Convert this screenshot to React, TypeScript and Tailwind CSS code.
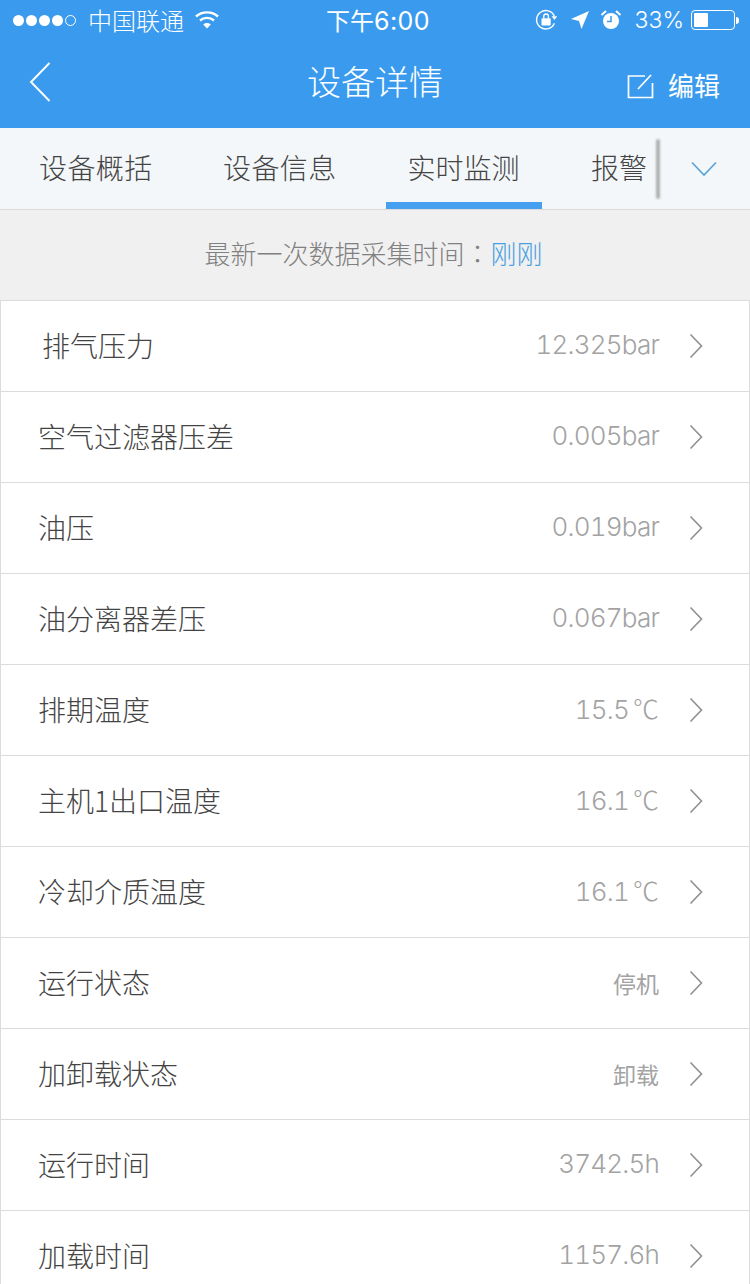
const font = { fontFamily: '"Noto Sans CJK SC", sans-serif' };

const rows: { label: string; value: string; cjk?: boolean; pl?: string }[] = [
  { label: "排气压力", value: "12.325bar", pl: "pl-[41px]" },
  { label: "空气过滤器压差", value: "0.005bar" },
  { label: "油压", value: "0.019bar" },
  { label: "油分离器差压", value: "0.067bar" },
  { label: "排期温度", value: "15.5℃" },
  { label: "主机1出口温度", value: "16.1℃" },
  { label: "冷却介质温度", value: "16.1℃" },
  { label: "运行状态", value: "停机", cjk: true },
  { label: "加卸载状态", value: "卸载", cjk: true },
  { label: "运行时间", value: "3742.5h" },
  { label: "加载时间", value: "1157.6h" },
];

function Chevron() {
  return (
    <svg width="16" height="26" viewBox="0 0 16 26" fill="none" className="shrink-0">
      <path d="M2.5 1.5 L13.5 13 L2.5 24.5" stroke="#8f8f8f" strokeWidth="1.6" />
    </svg>
  );
}

function StatusBar() {
  return (
    <div className="h-10 flex items-center justify-between pl-[13px] pr-[11px] relative text-white">
      <div className="flex items-center">
        <div className="flex items-center gap-[2px]">
          {[0, 1, 2, 3].map((i) => (
            <span key={i} className="w-[11px] h-[11px] rounded-full bg-white" />
          ))}
          <span className="w-[11px] h-[11px] rounded-full border border-white" />
        </div>
        <span className="ml-[12px] text-[24px] leading-none font-light">中国联通</span>
        <svg width="26" height="20" viewBox="0 0 26 20" className="ml-[10px]" fill="none" stroke="#fff" strokeWidth="2.4">
          <path d="M2 6.5 C8 1 18 1 24 6.5" />
          <path d="M6 10.5 C10 7 16 7 20 10.5" />
          <path d="M13 18.5 L9.2 14.4 C11.5 12.6 14.5 12.6 16.8 14.4 Z" fill="#fff" stroke="none" />
        </svg>
      </div>
      <span className="absolute left-[326px] top-[5px] text-[24px] leading-[30px] whitespace-nowrap font-normal">
        下午<span className="text-[25px] tracking-[0.4px]" style={{ fontFamily: '"Inter", sans-serif' }}>6:00</span>
      </span>
      <div className="flex items-center">
        <svg width="24" height="24" viewBox="0 0 26 24" fill="none" stroke="#fff" strokeWidth="1.5">
          <path d="M21 15.5 A10 10 0 1 1 21 8" />
          <path d="M18 8 L24 8 L21 12 Z" fill="#fff" stroke="none" />
          <rect x="7" y="10" width="10" height="8" rx="1" fill="#fff" stroke="none" />
          <path d="M9.5 10 V8 a2.5 2.5 0 0 1 5 0 V10" />
        </svg>
        <svg width="20" height="20" viewBox="0 0 20 20" className="ml-[11px]">
          <path d="M19 1 L11.5 19 L9 11 L1 9 Z" fill="#fff" />
        </svg>
        <svg width="22" height="22" viewBox="0 0 22 22" className="ml-[10px]" fill="none">
          <circle cx="11" cy="12" r="8" fill="#fff" />
          <path d="M11 7 V12.5 H7" stroke="#3a9bee" strokeWidth="1.5" />
          <path d="M1.5 6 L6 2 M20.5 6 L16 2" stroke="#fff" strokeWidth="2" />
        </svg>
        <span className="ml-[13px] text-[23px] leading-none font-light" style={{ fontFamily: '"Inter", sans-serif' }}>33%</span>
        <div className="ml-[7px] flex items-center">
          <div className="w-[44px] h-[20px] rounded-[4px] border border-white p-[2px]">
            <div className="w-[14px] h-full bg-white rounded-[1px]" />
          </div>
          <div className="w-[3px] h-[7px] bg-white rounded-r-full ml-[1px]" />
        </div>
      </div>
    </div>
  );
}

function NavBar() {
  return (
    <div className="h-[88px] flex items-center justify-between relative text-white pb-[2px]">
      <svg width="24" height="42" viewBox="0 0 24 42" fill="none" className="ml-[28px] mb-[2px]">
        <path d="M21.5 2 L3 21 L21.5 40" stroke="#fff" strokeWidth="1.9" />
      </svg>
      <span className="absolute left-0 right-0 top-[17px] text-center text-[34px] leading-[48px] font-light">设备详情</span>
      <div className="flex items-center mr-[30px] mt-[4px]">
        <svg width="27" height="27" viewBox="0 0 27 27" fill="none" stroke="#fff" strokeWidth="1.7">
          <path d="M25.5 11 V25.5 H1.5 V4 H18" />
          <path d="M11 17 L24 3" />
        </svg>
        <span className="ml-[14px] text-[26px] leading-none">编辑</span>
      </div>
    </div>
  );
}

function Tabs() {
  const tabs = ["设备概括", "设备信息"];
  return (
    <div className="h-[82px] bg-[#f3f7fa] border-b border-[#dcdcdc] flex relative overflow-hidden">
      {tabs.map((t) => (
        <div key={t} className="w-[184px] pl-[39px] shrink-0 flex items-center text-[28px] tracking-[0.4px] font-light text-[#444] pb-[4px]">
          {t}
        </div>
      ))}
      <div className="w-[156px] ml-[18px] shrink-0 h-[82px] flex items-center justify-center text-[28px] font-light text-[#444] pb-[4px] border-b-[8px] border-[#479fef]">
        <span className="mt-[8px] -ml-[1px]">实时监测</span>
      </div>
      <div className="ml-[49px] w-[68px] overflow-hidden whitespace-nowrap shrink-0 flex items-center text-[28px] font-light text-[#444] pb-[4px]">
        报警
      </div>
      <div className="absolute right-0 top-0 bottom-0 w-[91px] flex items-center justify-center bg-[#f3f7fa]">
        <div className="absolute left-[-3px] top-[11px] bottom-[10px] w-[4px] bg-[#b0b0b0] blur-[1px] rounded-full" />
        <svg width="26" height="16" viewBox="0 0 26 16" fill="none" className="-ml-[1px]">
          <path d="M1 1.5 L13 14 L25 1.5" stroke="#5aa3d6" strokeWidth="1.7" />
        </svg>
      </div>
    </div>
  );
}

function Value({ value, cjk }: { value: string; cjk?: boolean }) {
  if (cjk) return <span className="mr-[29px] leading-none text-[#a3a3a3] whitespace-nowrap text-[23px]">{value}</span>;
  const celsius = value.endsWith("℃");
  return (
    <span
      className="mr-[29px] leading-none text-[#a3a3a3] whitespace-nowrap text-[26px] font-light tabular-nums tracking-[-0.8px] pb-[2px]"
      style={{ fontFamily: '"Inter", sans-serif' }}
    >
      {celsius ? value.slice(0, -1) : value}
      {celsius && (
        <span className="ml-[4px] tracking-normal" style={{ fontFamily: '"Noto Sans CJK SC", sans-serif' }}>
          ℃
        </span>
      )}
    </span>
  );
}

function Row({ label, value, cjk, pl }: { label: string; value: string; cjk?: boolean; pl?: string }) {
  return (
    <div className={`h-[91px] shrink-0 border-b border-[#dcdcdc] flex items-center ${pl ?? "pl-[37px]"} pr-[45px]`}>
      <span className="text-[28px] leading-none font-light text-[#444] flex-1 whitespace-nowrap pb-[2px]">{label}</span>
      <Value value={value} cjk={cjk} />
      <Chevron />
    </div>
  );
}

export default function App() {
  return (
    <div className="w-[750px] h-[1284px] overflow-hidden flex flex-col bg-white" style={font}>
      <div className="bg-[#3a9bee] shrink-0">
        <StatusBar />
        <NavBar />
      </div>
      <Tabs />
      <div className="h-[90px] shrink-0 bg-[#f0f0f0] flex items-center justify-center text-[26px] font-light text-[#808080] pb-[5px] pr-[3px]">
        <span>最新一次数据采集时间</span>
        <span style={{ fontFamily: '"Noto Sans CJK TC", sans-serif' }}>：</span>
        <span className="text-[#4a9fe0]">刚刚</span>
      </div>
      <div className="flex-1 border border-b-0 border-[#dcdcdc] flex flex-col overflow-hidden">
        {rows.map((r) => (
          <Row key={r.label} {...r} />
        ))}
      </div>
    </div>
  );
}
